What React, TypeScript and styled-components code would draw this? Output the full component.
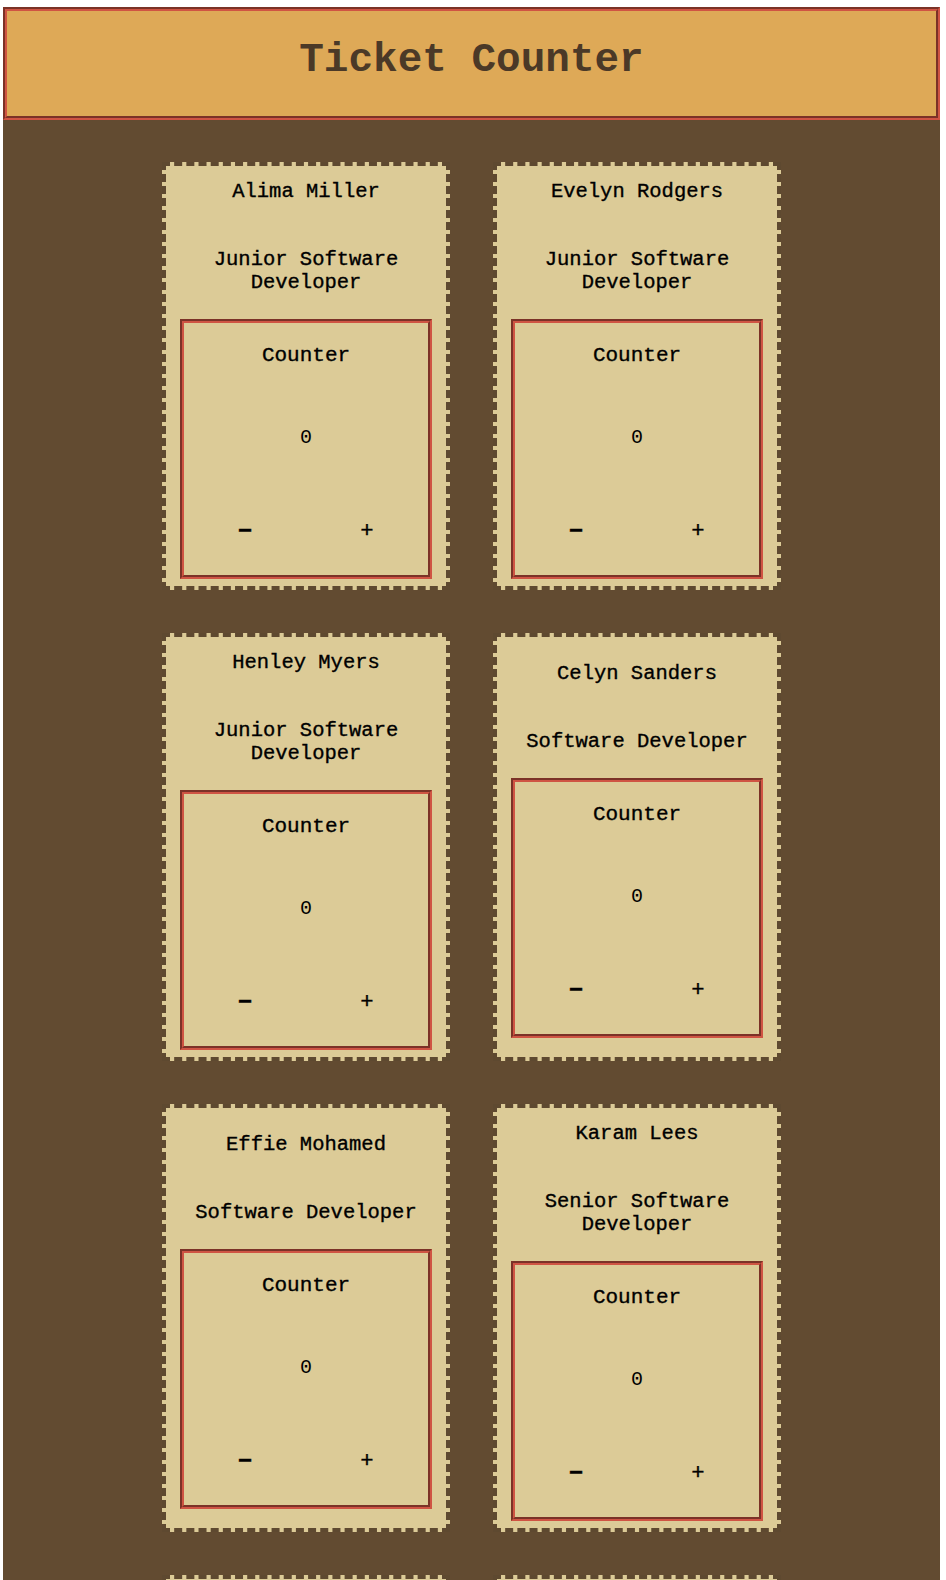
import React, { useState } from "react";
import styled, { createGlobalStyle } from "styled-components";

const GlobalStyle = createGlobalStyle`
  html, body {
    margin: 0;
    padding: 0;
    background: #ffffff;
  }
  body {
    font-family: "Liberation Mono", "DejaVu Sans Mono", monospace;
  }
`;

const employees = [
  { id: 1, name: "Alima Miller", title: "Junior Software Developer" },
  { id: 2, name: "Evelyn Rodgers", title: "Junior Software Developer" },
  { id: 3, name: "Henley Myers", title: "Junior Software Developer" },
  { id: 4, name: "Celyn Sanders", title: "Software Developer" },
  { id: 5, name: "Effie Mohamed", title: "Software Developer" },
  { id: 6, name: "Karam Lees", title: "Senior Software Developer" },
  { id: 7, name: "Rowan Price", title: "Junior Software Developer" },
  { id: 8, name: "Imani Hart", title: "Software Developer" },
];

// a single counter inside each employee ticket
function Counter() {
  const [count, setCount] = useState(0);

  return (
    <CounterBox>
      <CounterLabel>Counter</CounterLabel>
      <CountValue>{count}</CountValue>
      <ButtonRow>
        <CountButton $heavy onClick={() => setCount(count - 1)}>
          −
        </CountButton>
        <CountButton onClick={() => setCount(count + 1)}>+</CountButton>
      </ButtonRow>
    </CounterBox>
  );
}

export default function App() {
  return (
    <>
      <GlobalStyle />
      <PageWrapper>
        <Header>
          <Title>Ticket Counter</Title>
        </Header>
        <CardGrid>
          {employees.map((employee) => (
            <Ticket key={employee.id}>
              <Name>{employee.name}</Name>
              <JobTitle>{employee.title}</JobTitle>
              <Counter />
            </Ticket>
          ))}
        </CardGrid>
      </PageWrapper>
    </>
  );
}

const PageWrapper = styled.div`
  margin: 7px 0 0 3px;
  width: 937px;
  min-height: 1573px;
  background-color: #624b31;
`;

const Header = styled.header`
  height: 113px;
  box-sizing: border-box;
  display: flex;
  align-items: center;
  justify-content: center;
  background-color: #dea957;
  border: 4px groove #cf5443;
`;

const Title = styled.h1`
  margin: 0 0 8px 0;
  font-family: "Liberation Mono", "DejaVu Sans Mono", monospace;
  font-size: 41px;
  font-weight: 700;
  color: #4b3927;
`;

const CardGrid = styled.div`
  display: grid;
  grid-template-columns: repeat(2, 288px);
  justify-content: center;
  column-gap: 43px;
  row-gap: 43px;
  padding-top: 42px;
`;

const Ticket = styled.div`
  height: 428px;
  box-sizing: border-box;
  display: flex;
  flex-direction: column;
  align-items: center;
  justify-content: center;
  padding: 13px 14px 7px;
  background-color: #dccb97;
  border: 4px dashed #5e4930;
  color: #000;
  text-align: center;
  -webkit-text-stroke: 0.35px #000;
`;

const Name = styled.h3`
  margin: 0;
  font-size: 20.5px;
  line-height: 23px;
  font-weight: 400;
`;

const JobTitle = styled.p`
  margin: 45px 0 25px;
  max-width: 240px;
  font-size: 20.5px;
  line-height: 23px;
`;

const CounterBox = styled.div`
  width: 252px;
  height: 260px;
  box-sizing: border-box;
  display: flex;
  flex-direction: column;
  align-items: center;
  padding-top: 21px;
  border: 4px groove #cf5443;
`;

const CounterLabel = styled.h4`
  margin: 0;
  font-size: 21px;
  line-height: 24px;
  font-weight: 400;
`;

const CountValue = styled.p`
  margin: 58px 0 0;
  font-size: 20px;
  line-height: 23px;
  -webkit-text-stroke: 0;
`;

const ButtonRow = styled.div`
  display: flex;
  gap: 82px;
  margin-top: 69px;
`;

const CountButton = styled.button<{ $heavy?: boolean }>`
  width: 40px;
  height: 23px;
  padding: 0;
  background: none;
  border: none;
  cursor: pointer;
  font-family: "Liberation Sans", Arial, sans-serif;
  font-size: ${(p) => (p.$heavy ? "24px" : "22px")};
  font-weight: ${(p) => (p.$heavy ? 700 : 400)};
  line-height: 23px;
  color: #000;
`;
